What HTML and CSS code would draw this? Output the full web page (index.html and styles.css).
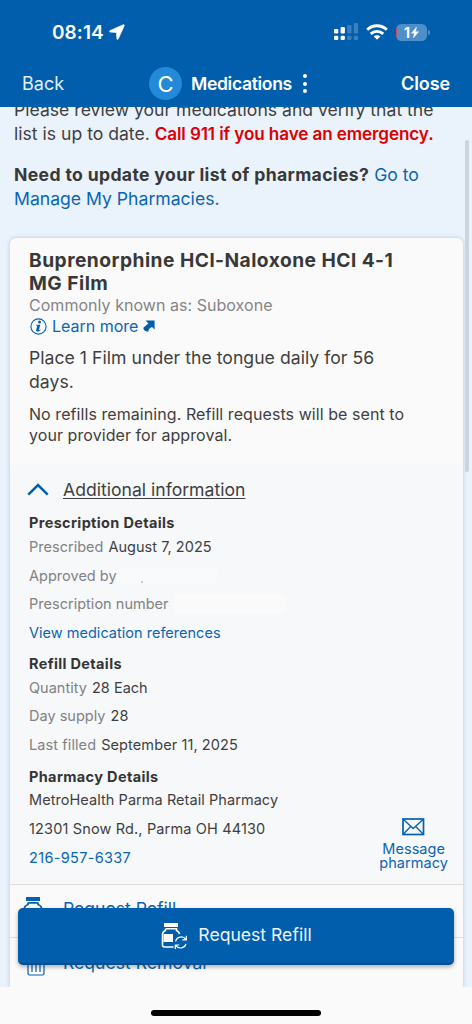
FILE: index.html
```html
<!DOCTYPE html>
<html lang="en">
<head>
<meta charset="utf-8">
<meta name="viewport" content="width=device-width, initial-scale=1">
<title>Medications</title>
<link rel="stylesheet" href="styles.css">
</head>
<body>
<div class="phone">
  <header class="top">
    <div class="status">
      <div class="clock"><span>08:14</span>
        <svg width="16" height="16" viewBox="0 0 16 16"><path d="M14.300.7.900 6.700c-.6.4-.5 1.200.2 1.300l6.400.5.4 6.400c.1.700.9.900 1.300.2L15.200 1.700c.3-.7-.2-1.200-.9-1z" fill="#fff" stroke="#fff" stroke-width=".7"/></svg>
      </div>
      <div class="indicators">
        <svg class="signal" width="25" height="18" viewBox="0 0 25 18" fill="#fff">
          <rect x="0" y="6" width="4.300" height="4.500" rx="1.200"/><rect x="6.600" y="4" width="4.300" height="6.500" rx="1.200"/>
          <rect x="0" y="12.800" width="4.300" height="4.200" rx="1.200"/><rect x="6.600" y="12.800" width="4.300" height="4.200" rx="1.200"/>
          <g opacity=".22"><rect x="13.200" y="2" width="4.300" height="8.500" rx="1.200"/><rect x="19.800" y="0" width="4.300" height="10.500" rx="1.200"/><rect x="13.200" y="12.800" width="4.300" height="4.200" rx="1.200"/><rect x="19.800" y="12.800" width="4.300" height="4.200" rx="1.200"/></g>
        </svg>
        <svg class="wifi" width="22" height="16" viewBox="0 0 22 16" fill="none" stroke="#fff" stroke-width="2.900"><path d="M1.200 5.800a14 14 0 0 1 19.600 0"/><path d="M4.800 9.900a8.900 8.900 0 0 1 12.400 0"/><path d="M11 15.800 7.700 12.500a4.700 4.700 0 0 1 6.600 0z" fill="#fff" stroke="none"/></svg>
        <div class="battery"><span>1</span><svg width="8" height="11" viewBox="0 0 8 11"><path d="M5.500 0 .3 6.200h3L2.300 11 7.700 4.700H4.600z" fill="#fff" stroke="#fff" stroke-width=".4"/></svg></div>
        <i class="battery-tip"></i>
      </div>
    </div>
    <nav class="nav">
      <span class="back">Back</span>
      <div class="heading"><span class="avatar">C</span><span class="heading-text">Medications</span><span class="dots"><i></i><i></i><i></i></span></div>
      <span class="close">Close</span>
    </nav>
  </header>

  <main class="content">
    <p class="intro intro-review">Please review your medications and verify that the<br>list is up to date. <strong class="alert">Call 911 if you have an emergency.</strong></p>
    <p class="intro intro-update"><strong>Need to update your list of pharmacies?</strong> <a class="link">Go to<br>Manage My Pharmacies.</a></p>

    <article class="card">
      <section class="summary">
        <h2>Buprenorphine HCl-Naloxone HCl 4-1<br>MG Film</h2>
        <p class="known">Commonly known as: Suboxone</p>
        <p class="learn"><svg width="17" height="17" viewBox="0 0 17 17"><circle cx="8.500" cy="8.500" r="7.600" fill="none" stroke="#0b62b0" stroke-width="1.100"/><circle cx="9.500" cy="4.100" r="1.500" fill="#0560ae"/><path d="M6 6.700h4.300L8.900 12q0 .5 1.500-.6l.2.600C9.500 13.300 8.200 13.800 7.100 13.500c-1-.2-1.100-.9-.9-1.700l1.100-4.200H5.900z" fill="#0560ae"/></svg><a class="link">Learn more</a><svg class="out" width="12" height="12" viewBox="0 0 12 12"><path d="M2.600.5h9V9.600L9 7C7 7.700 5.300 9.300 5.300 11.700 2.700 11.800.4 10.400.3 8.100 1.200 6.600 3.300 5.300 5.400 3.400z" fill="#005eac"/></svg></p>
        <p class="dose">Place 1 Film under the tongue daily for 56<br>days.</p>
        <p class="refills">No refills remaining. Refill requests will be sent to<br>your provider for approval.</p>
      </section>

      <section class="details">
        <div class="toggle"><svg width="22" height="13" viewBox="0 0 22 13"><path d="m1.300 11.600 9.700-9.600 9.700 9.600" fill="none" stroke="#005eac" stroke-width="2.500"/></svg><span>Additional information</span></div>
        <h3 class="first">Prescription Details</h3>
        <p class="row"><span class="label">Prescribed</span> August 7, 2025</p>
        <p class="row"><span class="label">Approved by</span><i class="blank blank-name"></i></p>
        <p class="row"><span class="label">Prescription number</span><i class="blank blank-number"></i></p>
        <p class="row"><a class="link">View medication references</a></p>
        <h3 class="refill-heading">Refill Details</h3>
        <p class="row"><span class="label">Quantity</span> 28 Each</p>
        <p class="row"><span class="label">Day supply</span> 28</p>
        <p class="row filled"><span class="label">Last filled</span> September 11, 2025</p>
        <div class="pharmacy">
          <div>
            <h3>Pharmacy Details</h3>
            <p class="row pharmacy-name">MetroHealth Parma Retail Pharmacy</p>
            <p class="row address">12301 Snow Rd., Parma OH 44130</p>
            <p class="row telephone"><a class="link">216-957-6337</a></p>
          </div>
          <a class="message"><svg width="23" height="18" viewBox="0 0 23 18" fill="none" stroke="#0560ae"><rect x="1" y="1" width="20.500" height="15.500" stroke-width="1.700"/><path d="m1.500 1.500 9.700 9 9.800-9M1.500 16l7.200-7.500M21 16l-7.200-7.500" stroke-width="1.300"/></svg><span>Message<br>pharmacy</span></a>
        </div>
      </section>

      <div class="action action-refill">
        <svg width="20" height="24" viewBox="0 0 20 24" fill="none" stroke="#0560ae" stroke-width="1.700"><path d="M3 0h14v4H3z" fill="#0560ae" stroke="none"/><path d="M5 5.800h10M5 5.500v2Q1.500 9 1.500 11v12h17V11q0-2-3.500-3.500v-2"/><path d="M2 11.500h12v8H2z" fill="#0560ae" stroke="none"/></svg>
        <a class="link">Request Refill</a>
      </div>
      <div class="action action-removal">
        <svg width="20" height="24" viewBox="0 0 20 24" fill="none" stroke="#0560ae" stroke-width="1.200"><path d="M0 4.500h20M6.500 4V1.500h7V4M2 5v16.500q0 1.500 1.500 1.500h13q1.500 0 1.500-1.500V5M6 8v12M10 8v12M14 8v12"/></svg>
        <a class="link">Request Removal</a>
      </div>
    </article>
    <i class="scrollbar"></i>
  </main>

  <button class="refill-button">
    <svg width="27" height="27" viewBox="0 0 27 27" fill="none" stroke="#fff"><path d="M3 0h14v4H3z" fill="#fff" stroke="none"/><path d="M4.500 5.800h11v1.700q2.500 1 3 3.500M4.500 5.800v1.700q-3 1.300-3 4v10.500q0 2 2 2h9" stroke-width="1.600"/><path d="M2.500 11h9.500v8H2.500z" fill="#fff" stroke="none"/><path d="M14.600 18.500a5.700 5.700 0 0 1 10.300-2M25 21a5.700 5.700 0 0 1-10.200 1.400M25.300 12.800v4h-4M14.300 26v-4h4" stroke-width="1.200"/></svg>
    <span>Request Refill</span>
  </button>

  <footer class="home"><i></i></footer>
</div>
</body>
</html>
```
FILE: styles.css
```css
* { box-sizing: border-box; }
body { margin: 0; font-family: Inter, "Liberation Sans", sans-serif; color: #3f3f3f; background: #fafafa; }
p, h2, h3 { margin: 0; }
svg { display: block; flex: none; }
strong { font-weight: 700; letter-spacing: .35px; color: #383838; }
.phone { position: relative; width: 472px; height: 1024px; display: flex; flex-direction: column; overflow: hidden; }

.top { height: 107px; flex: none; background: #005eac; color: #fff; z-index: 1; }
.status { height: 60px; padding: 4px 42px 0 52px; display: flex; align-items: center; justify-content: space-between; }
.clock { display: flex; align-items: center; gap: 5px; font-size: 19px; font-weight: 600; letter-spacing: .05px; }
.indicators { display: flex; align-items: center; }
.wifi { margin: 0 8px 0 7px; }
.battery { width: 31px; height: 17px; border-radius: 5.500px; background: linear-gradient(90deg, #cc4d5c 1px, #4d8fc6 1px); display: flex; align-items: center; justify-content: center; gap: 1px; font-size: 14px; font-weight: 700; }
.battery-tip { width: 2px; height: 5px; margin-left: 1px; border-radius: 0 2px 2px 0; background: #4d8fc6; }
.nav { height: 47px; padding: 0 22px; display: grid; grid-template-columns: 1fr auto 1fr; align-items: center; font-size: 18px; }
.back { color: #e4eef8; }
.heading { display: flex; align-items: center; padding-right: 16px; font-weight: 600; }
.heading-text { font-size: 17.600px; letter-spacing: -.35px; }
.avatar { width: 33px; height: 33px; margin-right: 9px; border-radius: 50%; background: #2489d9; display: grid; place-items: center; font-size: 22px; font-weight: 400; }
.dots { margin-left: 11px; display: grid; gap: 3.500px; }
.dots i { width: 4px; height: 4px; border-radius: 50%; background: #fff; }
.close { text-align: right; font-weight: 600; letter-spacing: -.1px; }

.content { position: relative; height: 880px; flex: none; overflow: hidden; background: #eaf2fc; }
.link { color: #0b65b3; }
.intro { padding-left: 14px; font-size: 17.600px; line-height: 23.500px; white-space: nowrap; }
.intro-review { margin-top: -9px; }
.intro-update { margin-top: 18px; }
.alert { font-size: 17.100px; font-weight: 600; letter-spacing: -.1px; color: #dc0000; }

.card { width: 453px; margin: 28px 0 0 10px; border-radius: 6px; background: #fafafa; box-shadow: 0 0 4px #b4c7d8; }
.summary { height: 227px; padding: 11px 0 0 19px; white-space: nowrap; }
h2 { font-size: 19.200px; line-height: 23px; font-weight: 700; letter-spacing: .47px; color: #383838; }
.known { font-size: 16px; line-height: 21px; letter-spacing: .04px; color: #858585; }
.learn { display: flex; align-items: center; height: 20px; padding-left: 1px; font-size: 16px; }
.learn .link { margin: 0 5px; }
.dose { margin-top: 10px; font-size: 17.600px; line-height: 24px; letter-spacing: .04px; }
.refills { margin-top: 10px; font-size: 16px; line-height: 21px; letter-spacing: .07px; }

.details { height: 420px; padding: 10.500px 15px 0 19px; background: #f6f8fa; border-bottom: 1px solid #ddd; white-space: nowrap; }
.toggle { height: 28px; display: flex; align-items: center; margin-left: -2px; gap: 14px; font-size: 17.600px; }
.toggle span { margin-top: -1px; text-decoration: underline; text-decoration-thickness: 1px; text-underline-offset: 2px; }
h3 { font-size: 14.500px; line-height: 19px; margin-top: 7.500px; font-weight: 700; letter-spacing: .35px; color: #353535; }
h3.first { margin-top: 9.500px; }
h3.refill-heading { margin: 6.500px 0 0; }
.row { height: 28.800px; display: flex; align-items: center; gap: 5px; font-size: 14.500px; letter-spacing: .02px; }
.filled { letter-spacing: .1px; }
.pharmacy-name { letter-spacing: .06px; }
.address { letter-spacing: .15px; }
.telephone { letter-spacing: .33px; }
.label { color: #828282; }
.blank { background: #fafafa; }
.blank-name { width: 97px; height: 16px; margin-left: -2px; background: radial-gradient(circle at 22px 15px, #b4d0ec 1px, #fafafa 1.500px); }
.blank-number { width: 111px; height: 20px; }
.pharmacy { display: flex; justify-content: space-between; }
.message { margin-top: 59px; display: flex; flex-direction: column; align-items: center; gap: 6px; color: #0b65b3; text-align: center; font-size: 14.500px; line-height: 14px; letter-spacing: .05px; }
.action { height: 53px; padding: 0 14px; display: flex; align-items: center; font-size: 17.600px; }
.action-refill { padding-bottom: 5px; gap: 20px; padding-left: 13px; border-bottom: 1px solid #ddd; }
.action-removal { padding-bottom: 5px; padding-left: 16px; gap: 17px; }
.action-removal svg { margin-top: 3px; }
.scrollbar { position: absolute; right: 3px; top: 33px; width: 4px; height: 332px; border-radius: 2px; background: #cbd4df; }

.refill-button { position: absolute; left: 18px; top: 908px; width: 436px; height: 57px; padding: 0 0 2px 1px; border: 0; border-bottom: 2px solid #004f91; border-radius: 5px; background: #005eac; box-shadow: 0 2px 4px rgba(0, 0, 0, .3); color: #edf4fb; font: 17.600px Inter, sans-serif; display: flex; align-items: center; justify-content: center; gap: 10px; z-index: 2; }
.refill-button svg { margin-top: 3px; }
.home { flex: 1; background: #fafafa; display: flex; justify-content: center; padding-top: 23px; }
.home i { width: 170px; height: 6px; border-radius: 3px; background: #000; }
```
